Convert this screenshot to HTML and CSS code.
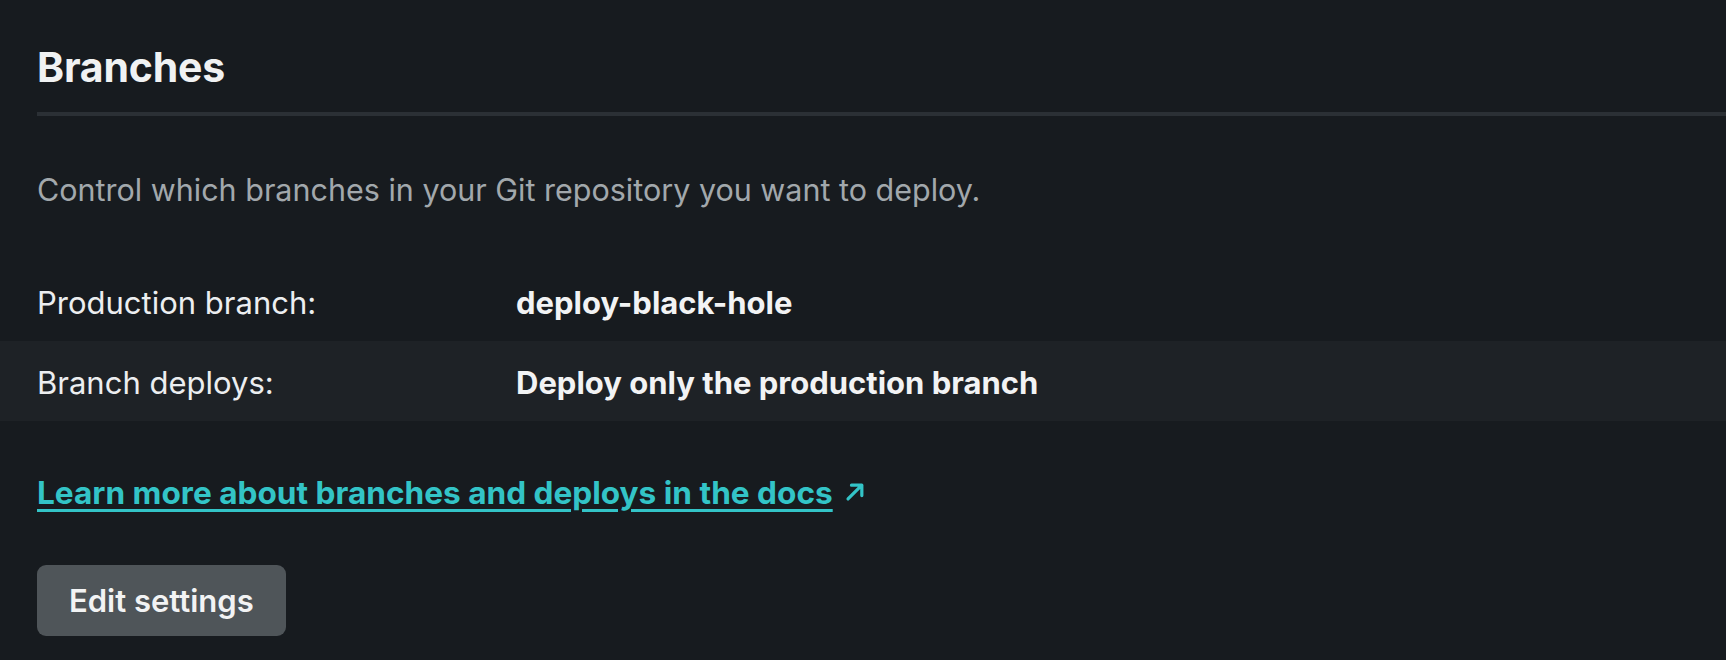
FILE: index.html
```html
<!DOCTYPE html>
<html lang="en">
<head>
<meta charset="utf-8">
<title>Branches</title>
<link rel="stylesheet" href="styles.css">
</head>
<body>
<section class="panel">
  <header class="panel-head">
    <h2 class="panel-title">Branches</h2>
  </header>
  <p class="panel-desc">Control which branches in your Git repository you want to deploy.</p>
  <dl class="settings">
    <div class="settings-row">
      <dt class="settings-label">Production branch:</dt>
      <dd class="settings-value">deploy-black-hole</dd>
    </div>
    <div class="settings-row settings-row--alt">
      <dt class="settings-label">Branch deploys:</dt>
      <dd class="settings-value">Deploy only the production branch</dd>
    </div>
  </dl>
  <p class="panel-link-wrap">
    <a class="panel-link" href="#">Learn more about branches and deploys in the docs</a>
    <svg class="ext-icon" viewBox="0 0 20 20" width="23" height="23" aria-hidden="true">
      <path d="M3.5 16.5 L15.5 4.5 M6.5 4.5 H15.5 V13.5" fill="none" stroke="currentColor" stroke-width="2.8" stroke-linecap="round" stroke-linejoin="round"/>
    </svg>
  </p>
  <div class="panel-actions">
    <button class="btn" type="button">Edit settings</button>
  </div>
</section>
</body>
</html>
```

FILE: styles.css
```css
html, body {
  margin: 0;
  padding: 0;
  background: #171b1f;
}

body {
  font-family: Inter, "Noto Sans", "Liberation Sans", sans-serif;
  color: #eceef0;
  height: 660px;
  overflow: hidden;
}

.panel {
  padding: 0;
}

.panel-head {
  margin-left: 37px;
  padding-top: 43px;
  padding-bottom: 21px;
  border-bottom: 4px solid #2b3035;
}

.panel-title {
  margin: 0;
  font-size: 41px;
  line-height: 48px;
  font-weight: 700;
  color: #f0f2f3;
  letter-spacing: -0.2px;
}

.panel-desc {
  margin: 54px 0 0 37px;
  font-size: 30.5px;
  line-height: 40px;
  color: #a2a8ac;
}

.settings {
  margin: 51px 0 0 0;
}

.settings-row {
  display: grid;
  grid-template-columns: 479px 1fr;
  align-items: center;
  height: 80px;
  padding: 3px 0 0 37px;
  box-sizing: border-box;
  font-size: 31px;
  line-height: 40px;
}

.settings-row--alt {
  background: #1e2226;
}

.settings-label {
  margin: 0;
  color: #eceef0;
}

.settings-value {
  margin: 0;
  font-weight: 700;
  color: #f2f3f4;
}

.panel-link-wrap {
  margin: 52px 0 0 37px;
  font-size: 31.6px;
  line-height: 40px;
  display: flex;
  align-items: center;
  gap: 11px;
  color: #33c4c7;
}

.panel-link {
  color: #33c4c7;
  font-weight: 700;
  text-decoration: underline;
  text-decoration-thickness: 3px;
  text-underline-offset: 5px;
}

.ext-icon {
  display: block;
  margin-top: -4px;
}

.panel-actions {
  margin: 52px 0 0 37px;
}

.btn {
  font-family: inherit;
  font-size: 31px;
  font-weight: 600;
  color: #f2f3f4;
  background: #4f5559;
  border: 0;
  border-radius: 9px;
  height: 71px;
  padding: 0 32px;
  cursor: pointer;
}
```
